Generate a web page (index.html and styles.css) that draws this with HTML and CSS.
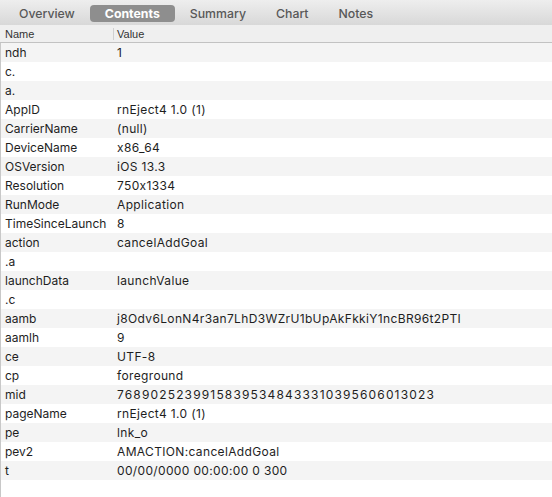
FILE: index.html
```html
<!DOCTYPE html>
<html>
<head>
<meta charset="utf-8">
<link rel="stylesheet" href="styles.css">
</head>
<body>
<div class="tabs">
  <span class="tab">Overview</span>
  <span class="tab active">Contents</span>
  <span class="tab">Summary</span>
  <span class="tab">Chart</span>
  <span class="tab">Notes</span>
</div>
<div class="head">
  <div class="c1">Name</div>
  <div class="c2 hv">Value</div>
</div>
<div class="body">
  <div class="row"><div class="c1">ndh</div><div class="c2">1</div></div>
  <div class="row"><div class="c1">c.</div><div class="c2"></div></div>
  <div class="row"><div class="c1">a.</div><div class="c2"></div></div>
  <div class="row"><div class="c1">AppID</div><div class="c2">rnEject4 1.0 (1)</div></div>
  <div class="row"><div class="c1">CarrierName</div><div class="c2">(null)</div></div>
  <div class="row"><div class="c1">DeviceName</div><div class="c2">x86_64</div></div>
  <div class="row"><div class="c1">OSVersion</div><div class="c2">iOS 13.3</div></div>
  <div class="row"><div class="c1">Resolution</div><div class="c2">750x1334</div></div>
  <div class="row"><div class="c1">RunMode</div><div class="c2">Application</div></div>
  <div class="row"><div class="c1">TimeSinceLaunch</div><div class="c2">8</div></div>
  <div class="row"><div class="c1">action</div><div class="c2">cancelAddGoal</div></div>
  <div class="row"><div class="c1">.a</div><div class="c2"></div></div>
  <div class="row"><div class="c1">launchData</div><div class="c2">launchValue</div></div>
  <div class="row"><div class="c1">.c</div><div class="c2"></div></div>
  <div class="row"><div class="c1">aamb</div><div class="c2">j8Odv6LonN4r3an7LhD3WZrU1bUpAkFkkiY1ncBR96t2PTI</div></div>
  <div class="row"><div class="c1">aamlh</div><div class="c2">9</div></div>
  <div class="row"><div class="c1">ce</div><div class="c2">UTF-8</div></div>
  <div class="row"><div class="c1">cp</div><div class="c2">foreground</div></div>
  <div class="row"><div class="c1">mid</div><div class="c2 long-num">76890252399158395348433310395606013023</div></div>
  <div class="row"><div class="c1">pageName</div><div class="c2">rnEject4 1.0 (1)</div></div>
  <div class="row"><div class="c1">pe</div><div class="c2">lnk_o</div></div>
  <div class="row"><div class="c1">pev2</div><div class="c2">AMACTION:cancelAddGoal</div></div>
  <div class="row"><div class="c1">t</div><div class="c2">00/00/0000 00:00:00 0 300</div></div>
</div>
</body>
</html>
```
FILE: styles.css
```css
html, body {
  margin: 0;
  padding: 0;
  background: #ffffff;
  font-family: Inter, "Liberation Sans", Arial, sans-serif;
  font-feature-settings: "calt" 0;
  color: #1a1a1a;
}
body {
  width: 552px;
  height: 497px;
  overflow: hidden;
  display: flex;
  flex-direction: column;
}
.tabs {
  height: 25px;
  display: flex;
  align-items: center;
  padding-left: 4px;
  background: linear-gradient(#eeeeee, #d8d8d8);
  box-sizing: border-box;
}
.tab {
  font-size: 12.3px;
  font-weight: 500;
  color: #585858;
  padding: 0 15px;
  height: 17px;
  line-height: 17px;
  margin-top: 2px;
  border-radius: 4px;
}
.tab.active {
  background: #8e8e8e;
  color: #ffffff;
  font-weight: 700;
}
.head {
  height: 17px;
  display: flex;
  background: #efefef;
  border-bottom: 1px solid #c2c2c2;
  font-family: "Liberation Sans", Arial, sans-serif;
  font-size: 11px;
  color: #333;
  align-items: center;
}
.head .c1 {
  width: 113px;
  padding-left: 5px;
  box-sizing: border-box;
}
.head .hv {
  border-left: 1px solid #d0d0d0;
  padding-left: 3px;
  height: 12px;
  line-height: 12px;
}
.body {
  flex: 1;
  border-left: 1px solid #c8c8c8;
}
.row {
  height: 19px;
  display: flex;
  align-items: center;
  font-size: 12px;
  color: #1e1e1e;
}
.row:nth-child(odd) {
  background: #f4f4f4;
}
.row .c1 {
  width: 116px;
  padding-left: 4px;
  box-sizing: border-box;
}
.row .c2 {
  flex: 1;
  letter-spacing: 0.35px;
}
.row .c2.long-num {
  letter-spacing: 1.15px;
}
```
